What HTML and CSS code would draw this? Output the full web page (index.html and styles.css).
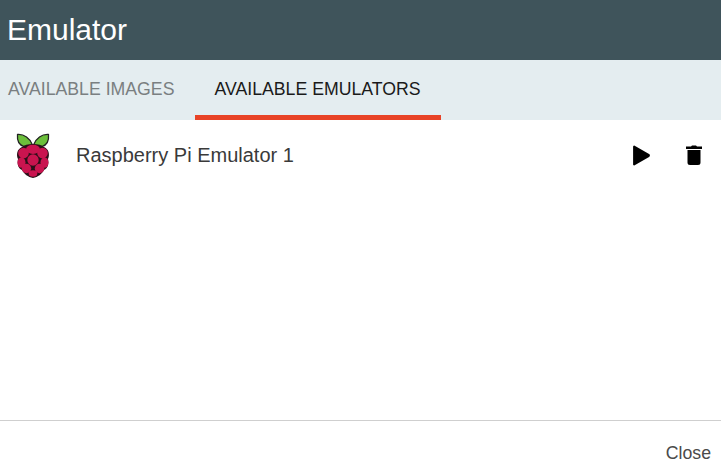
FILE: index.html
```html
<!DOCTYPE html>
<html lang="en">
<head>
<meta charset="utf-8">
<title>Emulator</title>
<link rel="stylesheet" href="styles.css">
</head>
<body>
<div class="dialog">
  <header class="title-bar">Emulator</header>
  <nav class="tabs">
    <div class="tab">AVAILABLE IMAGES</div>
    <div class="tab active">AVAILABLE EMULATORS</div>
  </nav>
  <main class="content">
    <div class="row">
      <svg class="logo" viewBox="0 0 36 46" width="36" height="46" aria-hidden="true">
        <path d="M17.500 13C15 6 9 2 2.500 2.500 2 8 4 13 9 14.500c3 .8 6.500.5 8.500-1.500z" fill="#6cbf3b" stroke="#222" stroke-width="1.300" stroke-linejoin="round"/>
        <path d="M18.500 13C21 6 27 2 33.500 2.500 34 8 32 13 27 14.500c-3 .8-6.500.5-8.500-1.500z" fill="#6cbf3b" stroke="#222" stroke-width="1.300" stroke-linejoin="round"/>
        <path d="M18 12c-5 0-9 1-11 3-5 2-6 8-4 12-1 5 0 9 4 11 2 4 6 7 11 8 5-1 9-4 11-8 4-2 5-6 4-11 2-4 1-10-4-12-2-2-6-3-11-3z" fill="#2a1018"/>
        <g fill="#c9144f">
          <ellipse cx="18" cy="17.300" rx="7" ry="4.600"/>
          <circle cx="8.500" cy="21" r="5.300"/>
          <circle cx="27.500" cy="21" r="5.300"/>
          <circle cx="18" cy="28" r="5.700"/>
          <ellipse cx="6.500" cy="30.500" rx="4" ry="5.200"/>
          <ellipse cx="29.500" cy="30.500" rx="4" ry="5.200"/>
          <circle cx="11.500" cy="36.500" r="4.700"/>
          <circle cx="24.500" cy="36.500" r="4.700"/>
          <ellipse cx="18" cy="41.500" rx="4.300" ry="3.300"/>
        </g>
      </svg>
      <span class="name">Raspberry Pi Emulator 1</span>
      <div class="actions">
        <svg class="play" viewBox="0 0 16 20" width="17" height="21" aria-hidden="true">
          <path d="M0 1.500v17a1 1 0 0 0 1.500.9l13.700-8a1.600 1.600 0 0 0 0-2.800L1.500.6A1 1 0 0 0 0 1.500z" fill="#000"/>
        </svg>
        <svg class="trash" viewBox="0 0 16 20" width="16" height="20" aria-hidden="true">
          <path d="M0 1.500h5L6 .5h4l1 1h5V4H0zM1.500 5h13v12.500a2.500 2.500 0 0 1-2.500 2.500H4a2.500 2.500 0 0 1-2.500-2.500z" fill="#000"/>
        </svg>
      </div>
    </div>
  </main>
  <footer class="footer"><span class="close">Close</span></footer>
</div>
</body>
</html>
```

FILE: styles.css
```css
* {
  box-sizing: border-box;
}

html,
body {
  margin: 0;
  padding: 0;
  background: #fff;
}

.dialog {
  display: flex;
  flex-direction: column;
  width: 721px;
  height: 465px;
  overflow: hidden;
  font-family: "Liberation Sans", Arial, sans-serif;
}

.title-bar {
  height: 60px;
  padding-left: 7px;
  background: #3f545b;
  color: #fff;
  font-size: 30px;
  line-height: 60px;
}

.tabs {
  display: flex;
  height: 60px;
  background: #e4edf0;
}

.tab {
  padding: 0 20px 0 8px;
  color: #7a7f81;
  font-size: 17.700px;
  line-height: 58px;
  white-space: nowrap;
}

.tab.active {
  margin-left: 1px;
  padding: 0 20px 0 19px;
  border-bottom: 5px solid #e84327;
  color: #1a1a1a;
}

.content {
  flex: 1;
}

.row {
  display: flex;
  align-items: center;
  height: 70px;
  padding: 0 19px 0 15px;
}

.logo {
  flex: none;
}

.name {
  margin-left: 25px;
  color: #3a3a3a;
  font-size: 20px;
}

.actions {
  display: flex;
  align-items: center;
  gap: 36px;
  margin-left: auto;
}

.footer {
  display: flex;
  justify-content: flex-end;
  align-items: center;
  height: 45px;
  padding: 20px 10px 0 0;
  border-top: 1px solid #cfcfcf;
}

.close {
  color: #4a4a4a;
  font-size: 17.700px;
}
```
